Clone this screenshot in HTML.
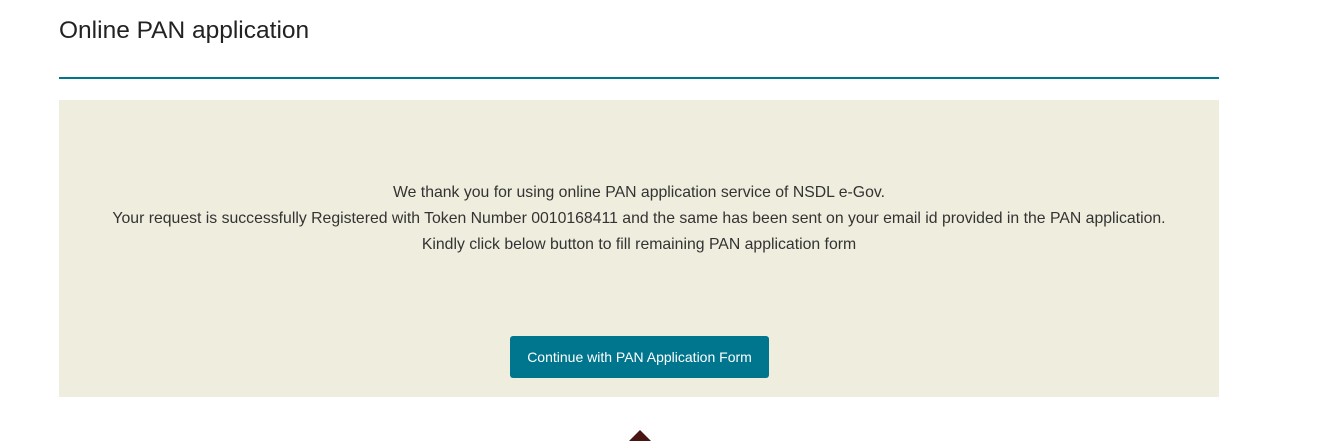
<!DOCTYPE html>
<html><head><meta charset="utf-8"><style>
html,body{margin:0;padding:0;background:#fff;width:1321px;height:440px;overflow:hidden;font-family:"Liberation Sans",Arial,sans-serif;color:#333;}
h1{position:absolute;left:59px;top:17px;margin:0;font-weight:normal;font-size:24.5px;color:#222;}
.line{position:absolute;left:59px;top:77px;width:1160px;height:2px;background:#00768c;}
.box{position:absolute;left:59px;top:100px;width:1160px;height:297px;background:#efedde;}
.msg{position:absolute;left:0;right:0;top:80px;text-align:center;font-size:15.8px;line-height:26px;color:#333;}
.btn{position:absolute;left:451px;top:236px;width:259px;height:42px;background:#00758e;color:#fff;border-radius:3px;font-size:14px;text-align:center;line-height:42px;}
.tri{position:absolute;left:629px;top:430px;width:0;height:0;border-left:11px solid transparent;border-right:11px solid transparent;border-bottom:11px solid #4a1414;}
</style></head><body>
<h1>Online PAN application</h1>
<div class="line"></div>
<div class="box">
<div class="msg">We thank you for using online PAN application service of NSDL e-Gov.<br>Your request is successfully Registered with Token Number 0010168411 and the same has been sent on your email id provided in the PAN application.<br>Kindly click below button to fill remaining PAN application form</div>
<div class="btn">Continue with PAN Application Form</div>
</div>
<div class="tri"></div>
</body></html>
